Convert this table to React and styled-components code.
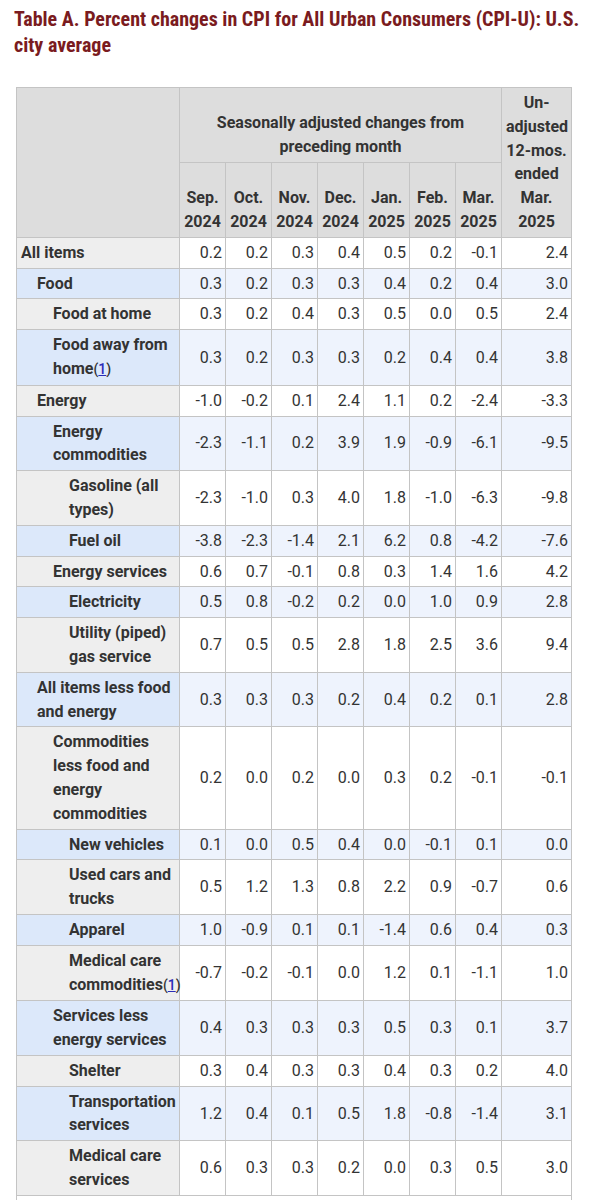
import React from 'react';
import styled, { createGlobalStyle } from 'styled-components';

const GlobalStyle = createGlobalStyle`
  body {
    margin: 0;
    background: #fff;
    font-family: Roboto, "Liberation Sans", sans-serif;
    color: #333;
  }
`;

const months = [
  ['Sep.', '2024'],
  ['Oct.', '2024'],
  ['Nov.', '2024'],
  ['Dec.', '2024'],
  ['Jan.', '2025'],
  ['Feb.', '2025'],
  ['Mar.', '2025'],
];

// label, indent level, footnote, values (7 months + 12-mos.)
const rows = [
  ['All items', 0, false, ['0.2', '0.2', '0.3', '0.4', '0.5', '0.2', '-0.1', '2.4']],
  ['Food', 1, false, ['0.3', '0.2', '0.3', '0.3', '0.4', '0.2', '0.4', '3.0']],
  ['Food at home', 2, false, ['0.3', '0.2', '0.4', '0.3', '0.5', '0.0', '0.5', '2.4']],
  ['Food away from home', 2, true, ['0.3', '0.2', '0.3', '0.3', '0.2', '0.4', '0.4', '3.8']],
  ['Energy', 1, false, ['-1.0', '-0.2', '0.1', '2.4', '1.1', '0.2', '-2.4', '-3.3']],
  ['Energy commodities', 2, false, ['-2.3', '-1.1', '0.2', '3.9', '1.9', '-0.9', '-6.1', '-9.5']],
  ['Gasoline (all types)', 3, false, ['-2.3', '-1.0', '0.3', '4.0', '1.8', '-1.0', '-6.3', '-9.8']],
  ['Fuel oil', 3, false, ['-3.8', '-2.3', '-1.4', '2.1', '6.2', '0.8', '-4.2', '-7.6']],
  ['Energy services', 2, false, ['0.6', '0.7', '-0.1', '0.8', '0.3', '1.4', '1.6', '4.2']],
  ['Electricity', 3, false, ['0.5', '0.8', '-0.2', '0.2', '0.0', '1.0', '0.9', '2.8']],
  ['Utility (piped) gas service', 3, false, ['0.7', '0.5', '0.5', '2.8', '1.8', '2.5', '3.6', '9.4']],
  ['All items less food and energy', 1, false, ['0.3', '0.3', '0.3', '0.2', '0.4', '0.2', '0.1', '2.8']],
  ['Commodities less food and energy commodities', 2, false, ['0.2', '0.0', '0.2', '0.0', '0.3', '0.2', '-0.1', '-0.1']],
  ['New vehicles', 3, false, ['0.1', '0.0', '0.5', '0.4', '0.0', '-0.1', '0.1', '0.0']],
  ['Used cars and trucks', 3, false, ['0.5', '1.2', '1.3', '0.8', '2.2', '0.9', '-0.7', '0.6']],
  ['Apparel', 3, false, ['1.0', '-0.9', '0.1', '0.1', '-1.4', '0.6', '0.4', '0.3']],
  ['Medical care commodities', 3, true, ['-0.7', '-0.2', '-0.1', '0.0', '1.2', '0.1', '-1.1', '1.0']],
  ['Services less energy services', 2, false, ['0.4', '0.3', '0.3', '0.3', '0.5', '0.3', '0.1', '3.7']],
  ['Shelter', 3, false, ['0.3', '0.4', '0.3', '0.3', '0.4', '0.3', '0.2', '4.0']],
  ['Transportation services', 3, false, ['1.2', '0.4', '0.1', '0.5', '1.8', '-0.8', '-1.4', '3.1']],
  ['Medical care services', 3, false, ['0.6', '0.3', '0.3', '0.2', '0.0', '0.3', '0.5', '3.0']],
];

function App() {
  return (
    <Page>
      <GlobalStyle />
      <Title>
        Table A. Percent changes in CPI for All Urban Consumers (CPI-U): U.S.
        <br />
        city average
      </Title>
      <Table>
        <colgroup>
          <col style={{ width: 163 }} />
          {months.map((m) => (
            <col key={m.join()} style={{ width: 46 }} />
          ))}
          <col style={{ width: 70 }} />
        </colgroup>
        <thead>
          <tr>
            <HeadCell rowSpan={2} />
            <HeadCell colSpan={7}>Seasonally adjusted changes from preceding month</HeadCell>
            <HeadCell rowSpan={2}>Un-adjusted 12-mos. ended Mar. 2025</HeadCell>
          </tr>
          <tr>
            {months.map(([mon, yr]) => (
              <HeadCell key={mon + yr}>
                {mon}
                <br />
                {yr}
              </HeadCell>
            ))}
          </tr>
        </thead>
        <tbody>
          {rows.map(([label, level, note, values], i) => (
            <tr key={label}>
              <LabelCell $level={level} $alt={i % 2 === 1}>
                {label}
                {note && (
                  <Note>
                    (<a href="#foot1">1</a>)
                  </Note>
                )}
              </LabelCell>
              {values.map((v, j) => (
                <NumCell key={j} $alt={i % 2 === 1}>
                  {v}
                </NumCell>
              ))}
            </tr>
          ))}
        </tbody>
        <tfoot>
          <tr>
            <FootCell colSpan={9} id="foot1">
              <strong>Footnotes</strong>
              <br />
              (1) Not seasonally adjusted.
            </FootCell>
          </tr>
        </tfoot>
      </Table>
    </Page>
  );
}

const Page = styled.div`
  padding: 6px 14px 40px 14px;
`;

const Title = styled.h2`
  margin: 0 0 29px 0;
  font-family: "Roboto Condensed", "Liberation Sans Narrow", Roboto, sans-serif;
  font-size: 20px;
  line-height: 26px;
  font-weight: 700;
  color: #7a1b20;
`;

const Table = styled.table`
  width: 555px;
  margin-left: 2px;
  table-layout: fixed;
  border-collapse: collapse;
  font-size: 16px;
  line-height: 23.8px;

  td,
  th {
    border: 1px solid #c4c4c4;
    padding: 3px 4px;
  }
`;

const HeadCell = styled.th`
  background: #dddddd;
  font-weight: 700;
  text-align: center;
  vertical-align: bottom;
  color: #333;
`;

const LabelCell = styled.th`
  background: ${(p) => (p.$alt ? '#dce8fa' : '#eeeeee')};
  font-weight: 700;
  text-align: left;
  vertical-align: middle;
  color: #333;
  && {
    padding-left: ${(p) => 4 + p.$level * 16}px;
  }
`;

const NumCell = styled.td`
  background: ${(p) => (p.$alt ? '#eef3fd' : '#ffffff')};
  text-align: right;
  vertical-align: middle;
  color: #333;
  && {
    padding-right: 3px;
  }
`;

const Note = styled.span`
  font-size: 14px;
  font-weight: 500;

  a {
    color: #2a2cb8;
    text-decoration: underline;
  }
`;

const FootCell = styled.td`
  background: #fff;
  text-align: left;
  color: #333;
`;

export default App;
